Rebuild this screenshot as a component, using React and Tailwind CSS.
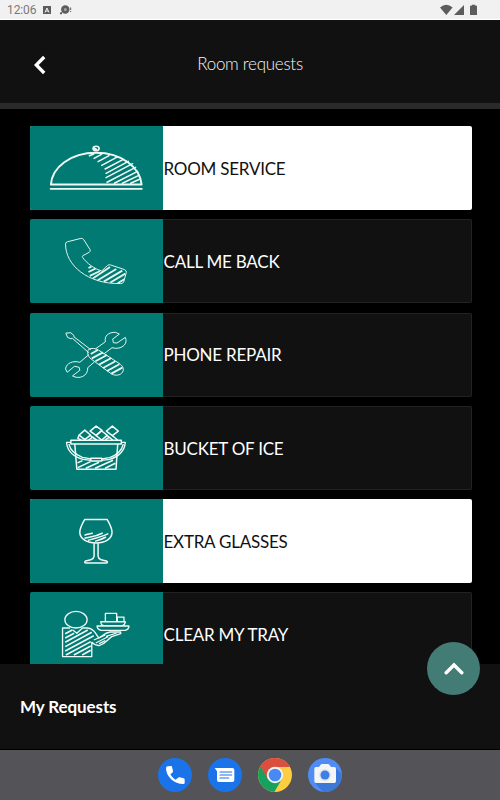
import React from 'react';
import clsx from 'clsx';

const RoomServiceIcon = () => (
  <svg viewBox="30 18 399 252" className="w-full h-full" fill="none" stroke="#eefaf6" strokeLinecap="round">
    <path d="M93 194C96 142 152 98 229 98S362 142 366 194Z" strokeWidth="6" strokeLinejoin="round" />
    <path d="M92 207H367" strokeWidth="5" />
    <ellipse cx="229" cy="85" rx="9" ry="6.5" strokeWidth="5" />
    <path d="M223 84L229 88" strokeWidth="6" />
    <path
      d="M209 107L222 102M223 115L245 103M235 125L268 107M246 136L292 111M256 147L311 118M259 160L326 124M259 173L339 131M262 187L348 142M284 190L354 154M308 190L358 166M333 190L360 178"
      strokeWidth="4.5"
    />
  </svg>
);

const PhoneIcon = () => (
  <svg viewBox="30 18 399 252" className="w-full h-full" fill="none" stroke="#dff5ee" strokeLinejoin="round">
    <path
      d="M137 93Q137 87 143 86L183 76Q189 75 192 80L211 110Q213 115 208 118L189 128Q186 130 189 134C200 150 224 168 246 174L264 157Q268 154 273 156L315 170Q321 173 320 179L312 207Q310 212 303 212C204 214 137 157 137 93Z"
      strokeWidth="3"
    />
    <path
      d="M206 165L215 161M206 177L227 167M210 189L241 174M220 196L271 162M234 202L290 168M252 206L308 173M272 209L317 182M294 211L314 199"
      strokeWidth="5.5"
    />
  </svg>
);

const RepairIcon = () => (
  <svg viewBox="30 20 399 252" className="w-full h-full" fill="none" stroke="#e4f7f1" strokeWidth="3" strokeLinejoin="round">
    <path d="M138 80L153 79L163 88L162 91L213 130M138 80L143 93L153 97L158 96L207 139" />
    <path d="M228 127L257 106C253 89 267 76 288 78L299 83L279 98L281 109L292 110L317 93C325 109 312 126 288 126L277 124L252 143" />
    <path d="M207 145L180 168C161 162 139 170 137 188L142 198L164 180L178 183L180 192L158 209C177 220 205 211 204 184L224 167" />
    <path d="M207 129C214 124 228 126 236 131L298 171C312 180 315 192 306 201C297 209 283 208 274 202L214 158C203 149 201 136 207 129Z" />
    <path
      d="M213 143L234 131M216 156L250 138M227 165L262 146M238 175L275 155M250 185L287 165M262 194L299 174M275 202L308 184"
      strokeWidth="5.5"
    />
  </svg>
);

const IceBucketIcon = () => (
  <svg viewBox="30 18 399 252" className="w-full h-full" fill="none" stroke="#f2fcf9" strokeWidth="4.5" strokeLinejoin="round">
    <path d="M195 90L212 105L195 119L178 105ZM229 78L247 91L229 106L211 93ZM278 78L296 93L278 107L260 93Z" />
    <path d="M210 105L229 120M229 106L245 92L263 106L246 120L228 106M262 106L279 120M262 106L246 120M278 107L294 120M206 120L219 111L231 120M178 105L174 115L184 120M257 119L270 111" />
    <path d="M153 121H305V132H153ZM165 134L171 208H289L294 134" />
    <path d="M153 127H140C142 153 162 171 190 178L214 181M305 127H317C315 153 296 172 270 178L246 181M147 132C151 150 167 164 188 172L214 177M311 132C307 150 292 165 270 173L246 177" strokeWidth="4" />
    <path d="M213 175H246V183H213Z" />
    <path d="M173 189L188 182M174 203L212 185M198 205L238 187M226 205L280 181M256 205L287 190" />
  </svg>
);

const GlassIcon = () => (
  <svg viewBox="30 15 399 252" className="w-full h-full" fill="none" stroke="#f2fcf9" strokeWidth="4.5" strokeLinejoin="round">
    <path d="M195 76H262C269 88 277 101 277 115C277 135 256 147 229 147S180 135 180 115C180 101 188 88 195 76Z" />
    <path d="M223 148V187C222 197 210 199 197 201Q192 207 198 207H260Q266 206 260 201C247 199 236 197 235 187V148" />
    <path d="M194 124C203 119 211 121 219 117M194 133C216 128 228 128 249 117M204 139C225 134 243 130 266 119M226 142C238 138 248 135 259 129" />
  </svg>
);

const TrayIcon = () => (
  <svg viewBox="30 20 399 252" className="w-full h-full" fill="none" stroke="#eefaf6" strokeWidth="4" strokeLinejoin="round">
    <ellipse cx="168.500" cy="103" rx="33.500" ry="25" />
    <path d="M151 128H128V214H216V171C222 177 231 182 240 180C257 176 262 164 276 154L303 145V140H271C253 143 248 153 237 158C228 144 221 129 203 128H188L171 144L158 133" />
    <path
      d="M136 145L157 134M136 158L163 144M136 171L204 134M136 184L216 141M136 197L222 151M138 209L213 169M162 209L213 182M187 209L213 195"
      strokeWidth="5"
    />
    <path d="M228 173L265 154M222 164L256 150M238 175L257 166M259 153L291 143" strokeWidth="3.5" />
    <path d="M257 107V84H291V107M293 107V95H313V107" />
    <path d="M243 109H317Q316 119 308 121H253Q244 120 243 109ZM232 122H328Q328 132 317 135H244Q232 132 232 122Z" />
  </svg>
);

const requests = [
  { label: 'ROOM SERVICE', icon: RoomServiceIcon, active: true },
  { label: 'CALL ME BACK', icon: PhoneIcon },
  { label: 'PHONE REPAIR', icon: RepairIcon },
  { label: 'BUCKET OF ICE', icon: IceBucketIcon },
  { label: 'EXTRA GLASSES', icon: GlassIcon, active: true },
  { label: 'CLEAR MY TRAY', icon: TrayIcon },
];

const StatusBar = () => (
  <div className="h-5 shrink-0 flex items-center justify-between bg-[#f1f1f1] border-b border-white pl-[7px] pr-[22px] text-[#5c5c5c]">
    <div className="flex items-center">
      <span className="w-[36px] pt-px font-[Roboto] text-[12px] leading-none tracking-[-0.1px] text-[#7a7a7a]">12:06</span>
      <svg viewBox="0 0 8 8" className="w-2 h-2">
        <path fill="currentColor" d="M0 0H8V8H0Z" />
        <path fill="none" stroke="#f1f1f1" d="M2 6.5L4 2L6 6.5M2.8 5H5.2" />
      </svg>
      <svg viewBox="0 0 12 10" className="w-3 h-2.5 ml-[8.5px]">
        <circle cx="5.3" cy="4.5" r="4.2" fill="currentColor" />
        <path d="M0 9.2V7.5L2 7V9.2Z" fill="currentColor" />
        <circle cx="5.3" cy="4.5" r="1.5" fill="#a5a5a5" />
        <path d="M10.7 2.5V5M10.7 6V7" stroke="currentColor" strokeWidth="1" />
      </svg>
    </div>
    <svg viewBox="0 0 38 12" className="w-[38px] h-3" fill="currentColor">
      <path d="M0 3.5Q6.3 -1.8 12.6 3.5L6.3 11Z" />
      <path d="M24 1V11H14Z" />
      <path d="M30 1.8H31.7V.7H35.3V1.8H37V11H30Z" />
    </svg>
  </div>
);

const NavBar = () => (
  <nav className="h-[51px] shrink-0 flex items-center justify-center gap-4 border-t border-black bg-[#545357]">
    <svg viewBox="39 39 102 102" className="w-[34px] h-[34px]">
      <circle cx="90" cy="90" r="51" fill="#1a73e8" />
      <path
        fill="white"
        d="M68 64L78 63Q81 63 81 66L84 78Q84 81 82 83L76 88C80 96 86 101 92 104L99 98Q101 96 104 97L116 100Q119 101 119 104V113Q119 117 115 117C87 117 63 95 63 69Q63 65 68 64Z"
      />
    </svg>
    <svg viewBox="189 39 102 102" className="w-[34px] h-[34px]">
      <circle cx="240" cy="90" r="51" fill="#1a73e8" />
      <path fill="white" d="M209 69H262Q268 69 268 75V105Q268 111 262 111H222Q216 111 216 105V79Z" />
      <path d="M225 81H260M225 90H260M225 99H251" stroke="#1a73e8" strokeWidth="3.5" strokeLinecap="round" />
    </svg>
    <svg viewBox="339 39 102 102" className="w-[34px] h-[34px]">
      <circle cx="390" cy="90" r="51" fill="#ffcd40" />
      <path fill="#18a15e" d="M346 64.5A51 51 0 0 0 388 141L411 102L390 90Z" />
      <path fill="#db4f41" d="M346 64.5A51 51 0 0 1 435 66H390V90L369 102Z" />
      <circle cx="390" cy="90" r="24.5" fill="#f4f4f4" />
      <circle cx="390" cy="90" r="19" fill="#4889f4" />
    </svg>
    <svg viewBox="489 39 102 102" className="w-[34px] h-[34px]">
      <circle cx="540" cy="90" r="51" fill="#4f8df5" />
      <path fill="#3c78d8" d="M573 70L590 87A51 51 0 0 1 535 141L510 114Z" />
      <path
        fill="#f5f5f5"
        d="M513 66H522L527 59Q528 57 531 57H549Q552 57 553 59L558 66H568Q573 66 573 71V109Q573 114 568 114H513Q508 114 508 109V71Q508 66 513 66Z"
      />
      <circle cx="540" cy="90" r="18" fill="#dce5f3" />
      <circle cx="540" cy="90" r="13.5" fill="#3f7ee2" />
    </svg>
  </nav>
);

const App = () => {
  return (
    <div className="relative flex flex-col w-[500px] h-[800px] overflow-hidden bg-black font-[Lato,sans-serif] text-white">
      <StatusBar />

      {/* Header */}
      <header className="h-[89px] shrink-0 grid grid-cols-[80px_1fr_80px] items-center bg-[#111111] border-b-[6px] border-[#2a2a2a]">
        <button className="flex justify-center" aria-label="Back">
          <svg viewBox="0 0 12 20" className="w-3 h-5 mt-[6px]" fill="none" stroke="white" strokeWidth="3.3">
            <path d="M10.2 2L2.3 10L10.2 18" />
          </svg>
        </button>
        <h1 className="text-center text-[17px] tracking-[-0.28px] font-light text-[#f4f4f4] mt-1">Room requests</h1>
      </header>

      {/* Request list */}
      <main className="flex-1 min-h-0 overflow-hidden pt-[17px] pl-[30px] pr-7">
        <div className="flex flex-col gap-[9.3px]">
          {requests.map(({ label, icon: Icon, active }) => (
            <div
              key={label}
              className={clsx(
                'flex items-center h-[84px] shrink-0 rounded-[2px] overflow-hidden',
                active ? 'bg-white text-[#111111]' : 'bg-[#111111] shadow-[inset_0_0_0_1px_#222222]'
              )}
            >
              <div className="w-[132.5px] h-[84px] shrink-0 bg-[#007a72]">
                <Icon />
              </div>
              <span className="pl-px pt-px text-[17px] tracking-[-0.23px]">{label}</span>
            </div>
          ))}
        </div>
      </main>

      {/* Footer */}
      <footer className="h-[85px] shrink-0 flex items-center pl-5 pt-px bg-[#111111]">
        <h2 className="text-[17px] tracking-[-0.1px] font-bold">My Requests</h2>
      </footer>

      <button
        aria-label="Scroll up"
        className="absolute left-[427px] top-[641.5px] w-[53px] h-[53px] rounded-full bg-[#437b75] flex items-center justify-center"
      >
        <svg viewBox="0 0 20 13" className="w-5 h-[13px]" fill="none" stroke="white" strokeWidth="3.4" strokeLinecap="round">
          <path d="M2.2 10.7L10 3L17.8 10.7" />
        </svg>
      </button>

      <NavBar />
    </div>
  );
};

export default App;
